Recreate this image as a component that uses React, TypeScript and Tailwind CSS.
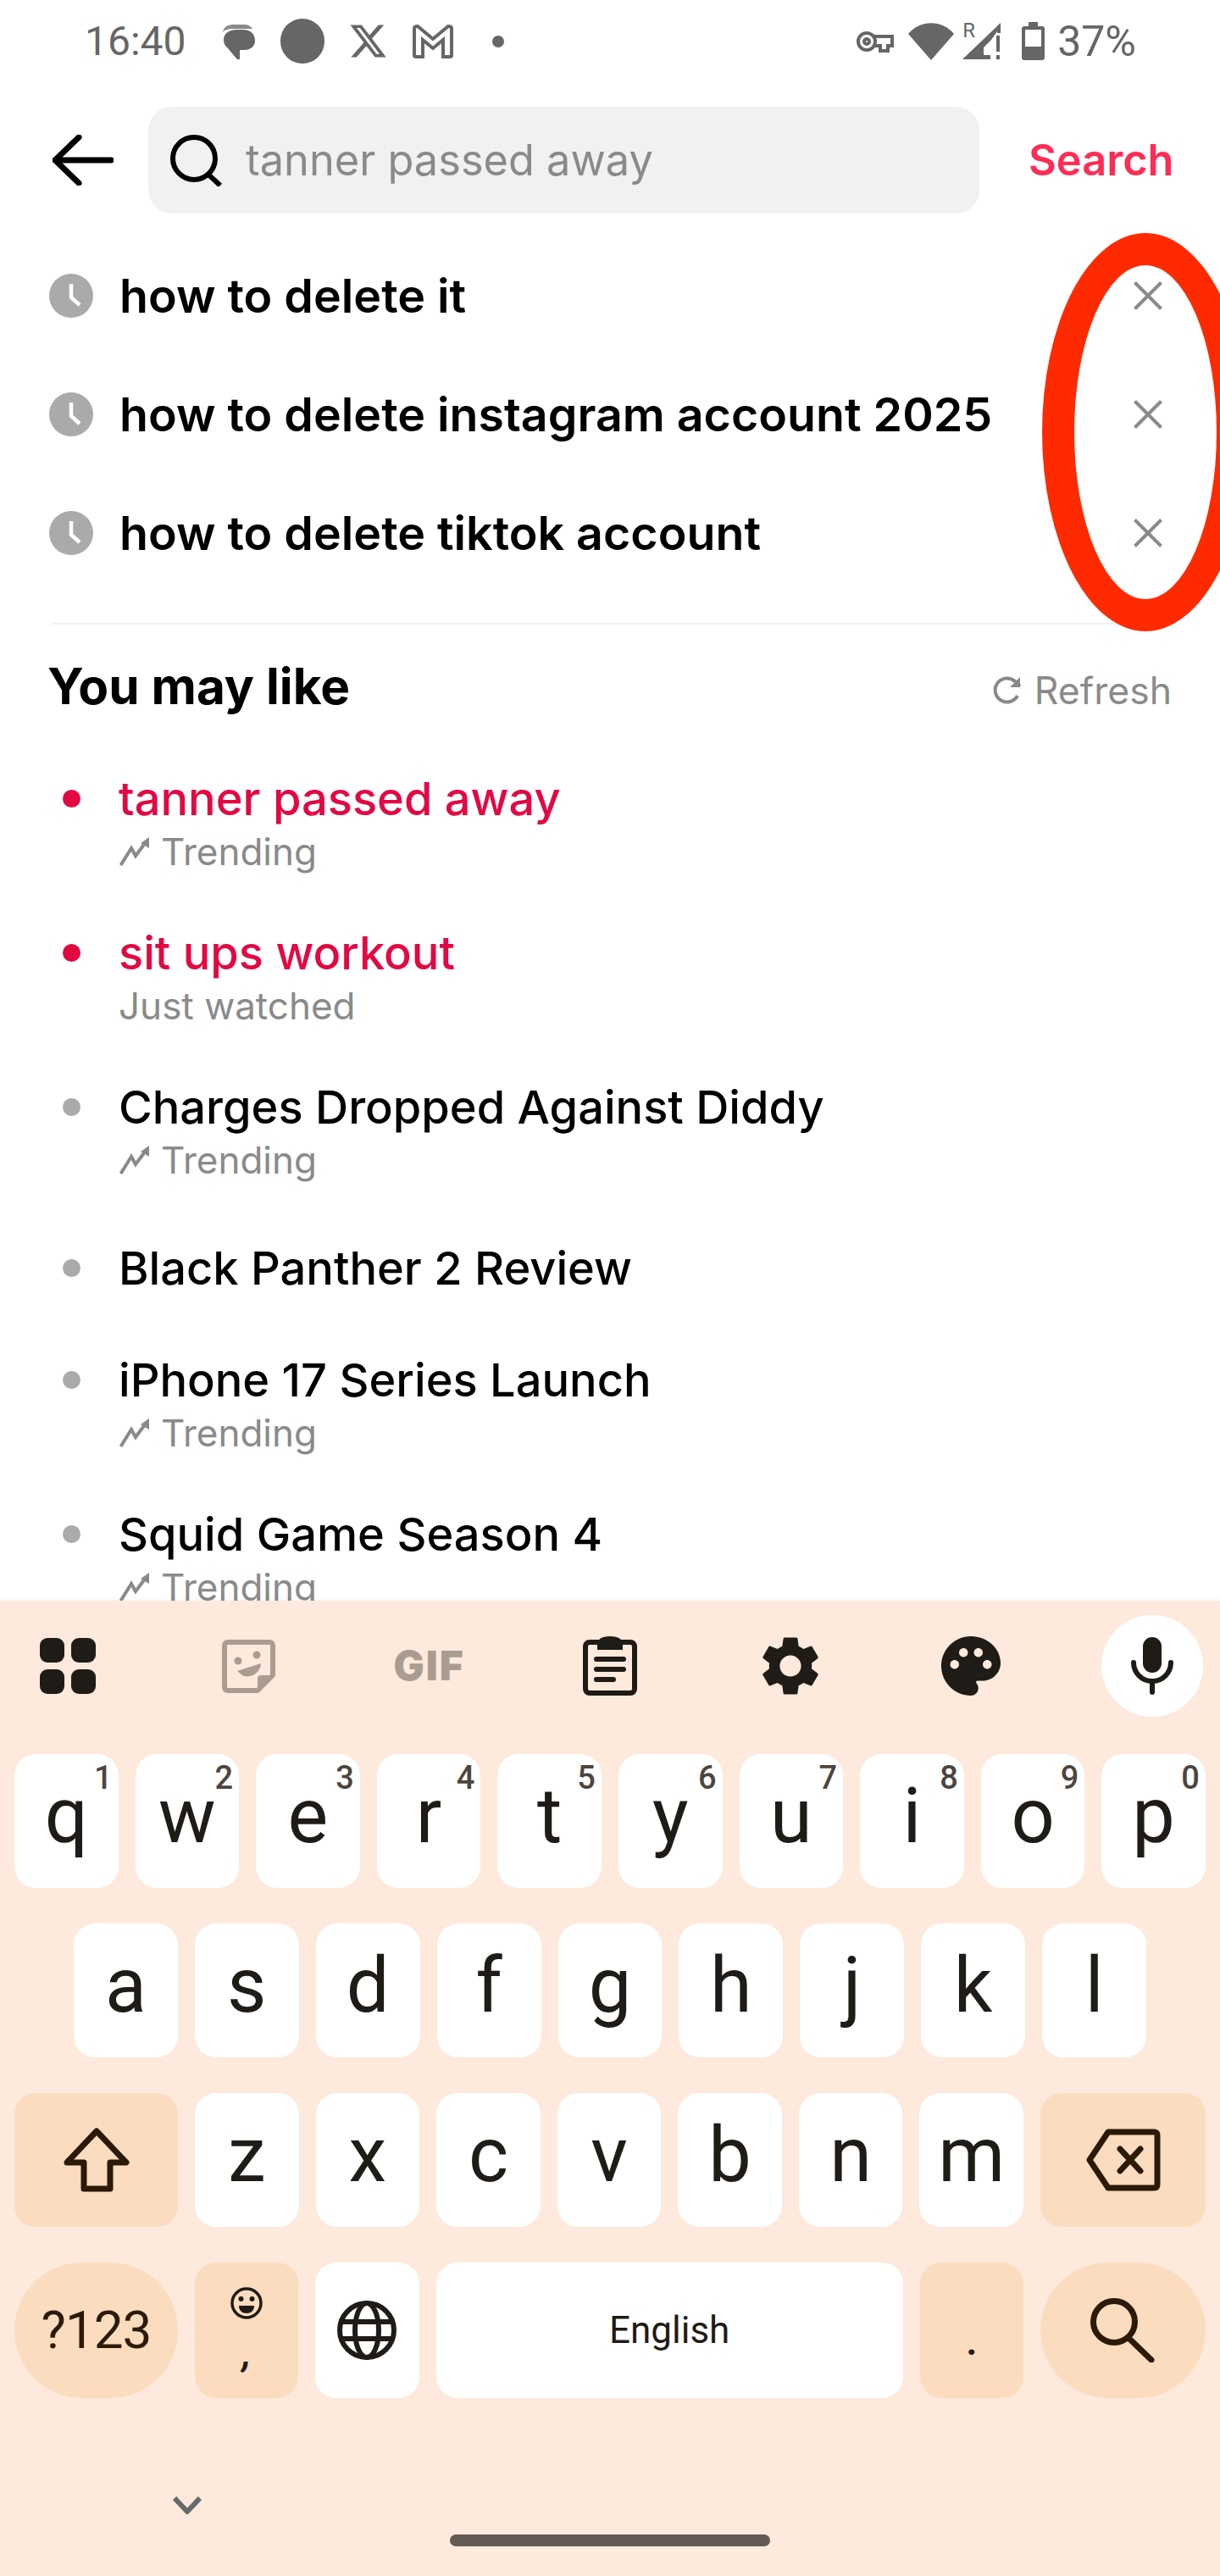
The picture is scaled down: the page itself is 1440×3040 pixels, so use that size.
import React from 'react';
import { MdSettings, MdPalette } from 'react-icons/md';
import { FaXTwitter } from 'react-icons/fa6';

const XIcon = () => (
  <svg width="34" height="34" viewBox="0 0 34 34" fill="none" stroke="#8a8a8a" strokeWidth="4">
    <path d="M1.5 1.5 L32.5 32.5 M32.5 1.5 L1.5 32.5" />
  </svg>
);

const ClockIcon = () => (
  <div className="flex h-[52px] w-[52px] shrink-0 items-center justify-center rounded-full bg-[#aaaaaa]">
    <svg width="52" height="52" viewBox="0 0 52 52" fill="none" stroke="#ffffff" strokeWidth="4.5">
      <path d="M26 12 V28 L36 37" />
    </svg>
  </div>
);

const TrendIcon = () => (
  <svg width="36" height="34" viewBox="0 0 36 34" fill="none" className="shrink-0">
    <path d="M1.5 33 L14 13 L19 22 L31 6" stroke="#8a8a8a" strokeWidth="4" />
    <path d="M25 7 L35 0 L35 13 Z" fill="#8a8a8a" />
  </svg>
);

const history = ['how to delete it', 'how to delete instagram account 2025', 'how to delete tiktok account'];

const suggestions = [
  { title: 'tanner passed away', sub: 'Trending', trend: true, hot: true },
  { title: 'sit ups workout', sub: 'Just watched', trend: false, hot: true },
  { title: 'Charges Dropped Against Diddy', sub: 'Trending', trend: true, hot: false },
  { title: 'Black Panther 2 Review', sub: '', trend: false, hot: false },
  { title: 'iPhone 17 Series Launch', sub: 'Trending', trend: true, hot: false },
  { title: 'Squid Game Season 4', sub: 'Trending', trend: true, hot: false },
];

const StatusBar = () => (
  <div className="flex h-[100px] items-center justify-between pl-[100px] pr-[99px] pb-[3px] text-[48px] leading-none text-[#666666] font-['Roboto',sans-serif]">
    <div className="flex items-center">
      <span className="w-[119px]">16:40</span>
      <svg width="40" height="42" viewBox="0 0 40 42" className="ml-[43px]">
        <path d="M1 10 C2 3 8 1 14 1 H26 C31 1 34 3 36 6 H14 C8 6 3 7 1 10 Z" fill="#8a8a8a" />
        <path d="M2 19 C2 11 9 7 18 7 H24 C33 7 39 11 39 20 C39 27 33 31 27 31 H21 V42 L18 42 L6 28 C3 25 2 23 2 19 Z" fill="#666666" />
      </svg>
      <div className="ml-[29px] h-[53px] w-[52px] rounded-full bg-[#666666]" />
      <FaXTwitter className="ml-[28px] h-[47px] w-[47px]" />
      <svg width="48" height="40" viewBox="0 0 48 40" fill="none" stroke="#666666" strokeWidth="4" className="ml-[29px]">
        <path d="M2 4 C2 2 4 2 6 2 L24 17 L42 2 C44 2 46 2 46 4 V36 C46 38 45 38 44 38 H36 V18 L24 28 L12 18 V38 H4 C3 38 2 38 2 36 Z" />
      </svg>
      <div className="ml-[46px] h-[14px] w-[14px] rounded-full bg-[#666666]" />
    </div>
    <div className="flex items-center">
      <svg width="44" height="26" viewBox="0 0 44 26" fill="none" stroke="#666666" strokeWidth="4">
        <circle cx="12" cy="13" r="10" />
        <circle cx="12" cy="13" r="3" />
        <path d="M21 7 H42 V18 H37 V24 H28 V18 H21" />
      </svg>
      <svg width="54" height="44" viewBox="0 0 54 44" className="ml-[17px]">
        <path d="M0 13 C14 -4 40 -4 54 13 L27 44 Z" fill="#666666" />
      </svg>
      <div className="relative ml-[10px] h-[44px] w-[45px]">
        <span className="absolute left-0 top-[-3px] text-[24px] leading-none">R</span>
        <svg width="45" height="44" viewBox="0 0 45 44" className="absolute left-0 top-0">
          <path d="M0 43 L45 0 V12 H41 V10 L34 20 L25 29 V38 H33 V43 Z" fill="#666666" />
          <rect x="40" y="15" width="4" height="19" fill="#666666" />
          <rect x="40" y="38" width="4" height="5" fill="#666666" />
        </svg>
      </div>
      <svg width="27" height="45" viewBox="0 0 27 45" className="ml-[25px]">
        <path d="M8 0 H19 V5 H24 C26 5 27 6 27 8 V42 C27 44 26 45 24 45 H3 C1 45 0 44 0 42 V8 C0 6 1 5 3 5 H8 Z" fill="#666666" />
        <rect x="4" y="9" width="19" height="20" fill="#ffffff" />
      </svg>
      <span className="ml-[15px] text-[50px]">37%</span>
    </div>
  </div>
);

const SearchHeader = () => (
  <div className="mt-[26px] flex h-[126px] items-center">
    <svg width="72" height="60" viewBox="0 0 72 60" fill="none" stroke="#000000" strokeWidth="7" strokeLinecap="round" strokeLinejoin="round" className="ml-[62px] shrink-0">
      <path d="M69 30 H3 M31 3 L3 30 L31 57" />
    </svg>
    <div className="ml-[41px] flex h-[126px] w-[981px] items-center rounded-[28px] bg-[#f1f1f2] pl-[26px]">
      <svg width="61" height="61" viewBox="0 0 61 61" fill="none" stroke="#000000" strokeWidth="6" className="shrink-0">
        <circle cx="28" cy="28" r="25" />
        <path d="M44 46 L59 60" />
      </svg>
      <span className="ml-[28px] text-[50.500px] leading-none text-[#8a8a8a]">tanner passed away</span>
    </div>
    <span className="ml-[58px] text-[50.500px] font-semibold leading-none text-[#fe2c55]">Search</span>
  </div>
);

const SearchHistory = () => (
  <div className="mt-[27px]">
    {history.map((item) => (
      <div key={item} className="flex h-[140px] items-center pl-[58px]">
        <ClockIcon />
        <span className="ml-[31px] flex-1 text-[55.500px] font-semibold leading-none text-black">{item}</span>
        <div className="mr-[68px]">
          <XIcon />
        </div>
      </div>
    ))}
  </div>
);

const Suggestions = () => (
  <div>
    <div className="mx-[60px] mt-[36px] h-[2px] bg-[#f1f1f2]" />
    <div className="flex h-[146px] items-center justify-between pl-[56px] pr-[57px]">
      <span className="text-[58.500px] font-bold leading-none text-black">You may like</span>
      <div className="flex items-center pt-[10px]">
        <svg width="36" height="36" viewBox="0 0 36 36" fill="none" stroke="#8a8a8a" strokeWidth="4">
          <path d="M30 24 A14 14 0 1 1 27 7 L33 13" />
          <path d="M33 2 V14 H21" fill="#8a8a8a" stroke="none" />
        </svg>
        <span className="ml-[14px] text-[44.500px] leading-none text-[#8a8a8a]">Refresh</span>
      </div>
    </div>
    <div className="mt-[28px]">
      {suggestions.map((item) => (
        <div key={item.title} className={item.sub ? 'flex h-[182px]' : 'mt-[8px] flex h-[132px]'}>
          <div className="flex h-[62px] w-[140px] shrink-0 items-center pl-[74px]">
            <div className={item.hot ? 'h-[21px] w-[21px] rounded-full bg-[#e30842]' : 'h-[21px] w-[21px] rounded-full bg-[#aaaaaa]'} />
          </div>
          <div>
            <div className={item.hot ? 'text-[54.200px] font-medium leading-[62px] text-[#e30842]' : 'text-[54.200px] font-medium leading-[62px] text-black'}>{item.title}</div>
            {item.sub && (
              <div className="flex h-[64px] items-center">
                {item.trend && (
                  <div className="ml-[1px] mr-[13px]">
                    <TrendIcon />
                  </div>
                )}
                <span className="text-[44px] leading-none text-[#8a8a8a]">{item.sub}</span>
              </div>
            )}
          </div>
        </div>
      ))}
    </div>
  </div>
);

const Key = ({ label, hint }: { label: string; hint?: string }) => (
  <div className="relative flex h-[158px] flex-1 items-center justify-center rounded-[25px] bg-white pb-[10px] text-[90px] leading-none text-[#1f1b16]">
    {label}
    {hint && <span className="absolute right-[7px] top-[9px] text-[38px] font-medium leading-none text-[#4d453e]">{hint}</span>}
  </div>
);

const Toolbar = () => (
  <div className="mt-[17px] flex h-[120px] items-center justify-between px-[20px]">
    <div className="flex w-[120px] justify-center">
      <div className="grid grid-cols-2 gap-[8px]">
        <div className="h-[29px] w-[29px] rounded-[9px] bg-[#1f1b16]" />
        <div className="h-[29px] w-[29px] rounded-[9px] bg-[#1f1b16]" />
        <div className="h-[29px] w-[29px] rounded-[9px] bg-[#1f1b16]" />
        <div className="h-[29px] w-[29px] rounded-[9px] bg-[#1f1b16]" />
      </div>
    </div>
    <div className="flex w-[120px] justify-center">
      <svg width="63" height="63" viewBox="0 0 63 63" fill="none">
        <path d="M7 3 H56 C58.500 3 60 4.500 60 7 V42 L42 60 H7 C4.500 60 3 58.500 3 56 V7 C3 4.500 4.500 3 7 3 Z" stroke="#aa9d90" strokeWidth="6" strokeLinejoin="round" />
        <path d="M60 42 H46 C43.500 42 42 43.500 42 46 V60 Z" fill="#aa9d90" />
        <ellipse cx="19" cy="25" rx="4.500" ry="4.500" fill="#aa9d90" />
        <ellipse cx="41" cy="18" rx="4.500" ry="4.500" fill="#aa9d90" />
        <path d="M18 37 L46 28 C46 38 34 47 24 42 Z" fill="#aa9d90" />
      </svg>
    </div>
    <div className="flex w-[120px] justify-center text-[48px] font-black leading-none tracking-[2px] text-[#aa9d90] font-['Inter',sans-serif]">GIF</div>
    <div className="flex w-[120px] justify-center">
      <svg width="64" height="70" viewBox="0 0 64 70" fill="none" stroke="#1f1b16" strokeWidth="6">
        <path d="M20 7 H8 C5 7 3 9 3 12 V62 C3 65 5 67 8 67 H56 C59 67 61 65 61 62 V12 C61 9 59 7 56 7 H44" />
        <path d="M20 10 C20 4 26 3 32 3 C38 3 44 4 44 10 V13 H20 Z" fill="#1f1b16" />
        <path d="M16 27 H48 M16 39 H48 M16 51 H36" strokeWidth="6" strokeLinecap="round" />
      </svg>
    </div>
    <div className="flex w-[120px] justify-center">
      <MdSettings className="h-[84px] w-[84px] text-[#1f1b16]" />
    </div>
    <div className="flex w-[120px] justify-center pr-[2px]">
      <MdPalette className="h-[84px] w-[84px] text-[#1f1b16]" />
    </div>
    <div className="flex h-[120px] w-[120px] items-center justify-center rounded-full bg-white">
      <svg width="50" height="68" viewBox="0 0 50 68" fill="none">
        <rect x="14" y="0" width="22" height="42" rx="11" fill="#1f1b16" />
        <path d="M3 30 A22 22 0 0 0 47 30 M25 52 V65" stroke="#1f1b16" strokeWidth="6" strokeLinecap="round" />
      </svg>
    </div>
  </div>
);

const Keyboard = () => (
  <div className="flex h-[1151px] shrink-0 flex-col bg-[#fdeadc] shadow-[0_-2px_6px_rgba(0,0,0,0.04)] font-['Roboto',sans-serif]">
    <Toolbar />
    <div className="mt-[44px] flex flex-col gap-[42px]">
      <div className="flex gap-[20px] px-[17px]">
        {'qwertyuiop'.split('').map((letter, index) => (
          <Key key={letter} label={letter} hint={String((index + 1) % 10)} />
        ))}
      </div>
      <div className="flex gap-[20px] px-[87px]">
        {'asdfghjkl'.split('').map((letter) => (
          <Key key={letter} label={letter} />
        ))}
      </div>
      <div className="flex gap-[20px] px-[17px]">
        <div className="flex h-[158px] w-[193px] shrink-0 items-center justify-center rounded-[25px] bg-[#fcdcbf]">
          <svg width="78" height="76" viewBox="0 0 78 76" fill="none" stroke="#2b1a08" strokeWidth="7" strokeLinejoin="round">
            <path d="M39 4 L74 41 H55 V72 H24 V41 H4 Z" />
          </svg>
        </div>
        {'zxcvbnm'.split('').map((letter) => (
          <Key key={letter} label={letter} />
        ))}
        <div className="flex h-[158px] w-[195px] shrink-0 items-center justify-center rounded-[25px] bg-[#fcdcbf]">
          <svg width="88" height="74" viewBox="0 0 88 74" fill="none" stroke="#2b1a08" strokeWidth="7" strokeLinejoin="round" strokeLinecap="round">
            <path d="M26 4 H80 C83 4 84 5 84 8 V66 C84 69 83 70 80 70 H26 L4 37 Z" />
            <path d="M40 24 L64 50 M64 24 L40 50" />
          </svg>
        </div>
      </div>
      <div className="flex gap-[20px] px-[17px]">
        <div className="flex h-[160px] w-[193px] shrink-0 items-center justify-center rounded-[80px] bg-[#fcdcbf] text-[62px] leading-none tracking-[-1px] text-[#2b1a08]">?123</div>
        <div className="flex h-[160px] flex-1 flex-col items-center rounded-[25px] bg-[#fcdcbf] pt-[29px] text-[#1f1b16]">
          <svg width="38" height="38" viewBox="0 0 38 38" fill="none">
            <circle cx="19" cy="19" r="17" stroke="#1f1b16" strokeWidth="3.500" />
            <circle cx="12.500" cy="14" r="3" fill="#1f1b16" />
            <circle cx="25.500" cy="14" r="3" fill="#1f1b16" />
            <path d="M10 22 H28 C28 28 24 31 19 31 C14 31 10 28 10 22 Z" fill="#1f1b16" />
          </svg>
          <span className="mt-[18px] text-[44px] font-bold italic leading-none">,</span>
        </div>
        <div className="flex h-[160px] flex-1 items-center justify-center rounded-[25px] bg-white">
          <svg width="70" height="70" viewBox="0 0 70 70" fill="none" stroke="#1f1b16" strokeWidth="6">
            <circle cx="35" cy="35" r="32" />
            <ellipse cx="35" cy="35" rx="14" ry="32" />
            <path d="M6 25 H64 M6 45 H64" />
          </svg>
        </div>
        <div className="flex h-[160px] w-[551px] shrink-0 items-center justify-center rounded-[25px] bg-white text-[44px] leading-none text-[#1f1b16]">English</div>
        <div className="flex h-[160px] flex-1 items-end justify-center rounded-[25px] bg-[#fcdcbf] pb-[44px] text-[44px] font-bold leading-none text-[#2b1a08]">.</div>
        <div className="flex h-[160px] w-[195px] shrink-0 items-center justify-center rounded-[80px] bg-[#fcdcbf]">
          <svg width="76" height="76" viewBox="0 0 76 76" fill="none" stroke="#2b1a08" strokeWidth="7" strokeLinecap="round">
            <circle cx="28" cy="28" r="24.500" />
            <path d="M45 47 L72 73" />
          </svg>
        </div>
      </div>
    </div>
    <div className="mt-[116px] flex items-start">
      <svg width="34" height="21" viewBox="0 0 34 21" fill="none" stroke="#666a6b" strokeWidth="6" className="ml-[204px]">
        <path d="M2 2 L17 18 L32 2" />
      </svg>
      <div className="ml-[293px] mt-[45px] h-[14px] w-[378px] rounded-full bg-[#645a53]" />
    </div>
  </div>
);

export default function App() {
  return (
    <div className="relative flex h-[3040px] w-[1440px] flex-col overflow-hidden bg-white font-['Inter',sans-serif]">
      <div className="min-h-0 flex-1 overflow-hidden">
        <StatusBar />
        <SearchHeader />
        <SearchHistory />
        <Suggestions />
      </div>
      <Keyboard />
      {/* red marker circled over the clear buttons */}
      <div className="absolute left-[1230px] top-[275px] h-[470px] w-[244px] rounded-[50%] border-[38px] border-[#ff2a00]" />
    </div>
  );
}
